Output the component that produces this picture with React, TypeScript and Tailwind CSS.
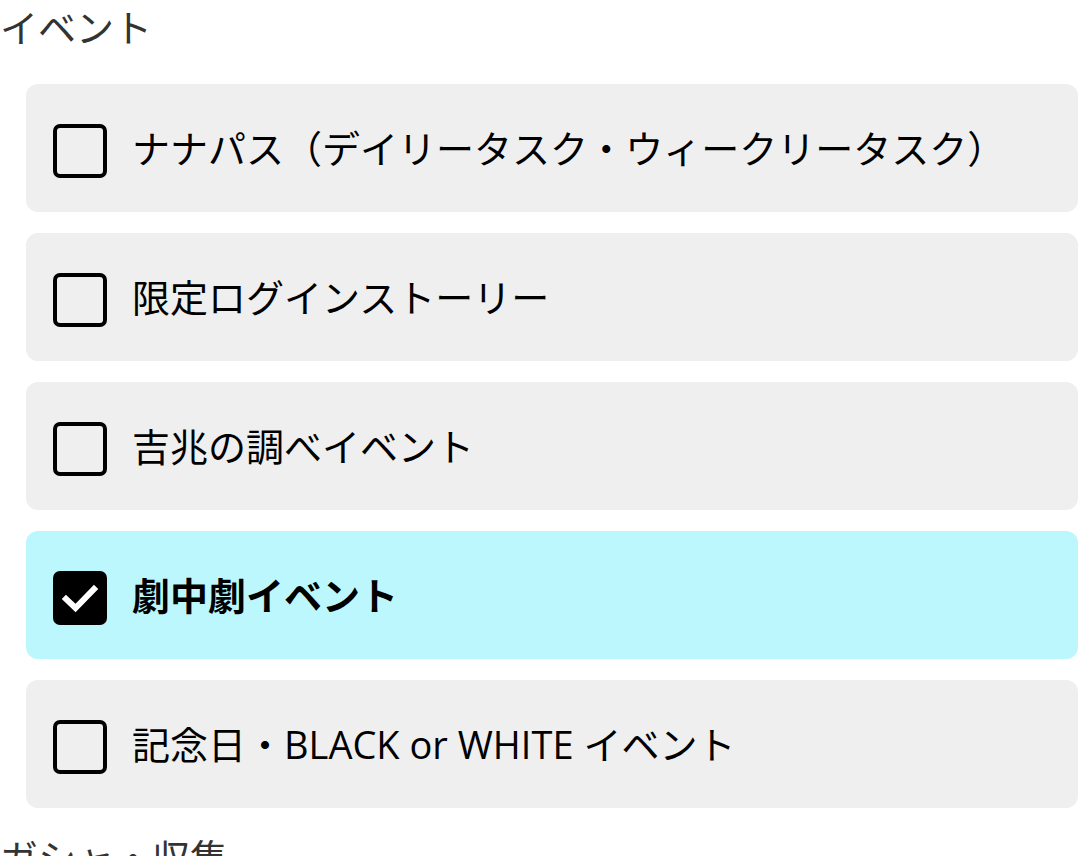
import { useState } from "react";

const EVENTS = [
  "ナナパス（デイリータスク・ウィークリータスク）",
  "限定ログインストーリー",
  "吉兆の調べイベント",
  "劇中劇イベント",
  "記念日・BLACK or WHITE イベント",
];

function CheckBox({ checked }: { checked: boolean }) {
  if (checked) {
    return (
      <span className="mt-[6px] flex h-[54px] w-[54px] shrink-0 items-center justify-center rounded-[7px] bg-black">
        <svg width="38" height="38" viewBox="0 0 38 38" fill="none">
          <path d="M5 20 L14.5 29 L33 10" stroke="white" strokeWidth="6" strokeLinecap="square" />
        </svg>
      </span>
    );
  }
  return <span className="mt-[6px] h-[54px] w-[54px] shrink-0 rounded-[7px] border-[4px] border-black" />;
}

export default function App() {
  const [selected, setSelected] = useState<number[]>([3]);

  const toggle = (i: number) =>
    setSelected((s) => (s.includes(i) ? s.filter((x) => x !== i) : [...s, i]));

  return (
    <div
      className="min-h-[856px] overflow-hidden bg-white"
      style={{ fontFamily: "'Open Sans', 'Noto Sans CJK JP', sans-serif" }}
    >
      <h2 className="text-[38px] leading-[55px] font-normal text-[#333]">イベント</h2>
      <div className="mt-[29px] flex flex-col gap-[21px] pl-[26px] pr-[2px]">
        {EVENTS.map((label, i) => {
          const on = selected.includes(i);
          return (
            <button
              key={label}
              type="button"
              onClick={() => toggle(i)}
              className={
                "flex h-[128px] items-center gap-[25px] rounded-[12px] px-[27px] text-left " +
                (on ? "bg-[#bcf7fd]" : "bg-[#efefef]")
              }
            >
              <CheckBox checked={on} />
              <span
                className={
                  "text-[38px] leading-none text-black " + (on ? "font-bold" : "font-normal")
                }
              >
                {label}
              </span>
            </button>
          );
        })}
      </div>
      <h2 className="mt-[22px] text-[38px] leading-[55px] font-normal text-[#333]">ガシャ・収集</h2>
    </div>
  );
}
